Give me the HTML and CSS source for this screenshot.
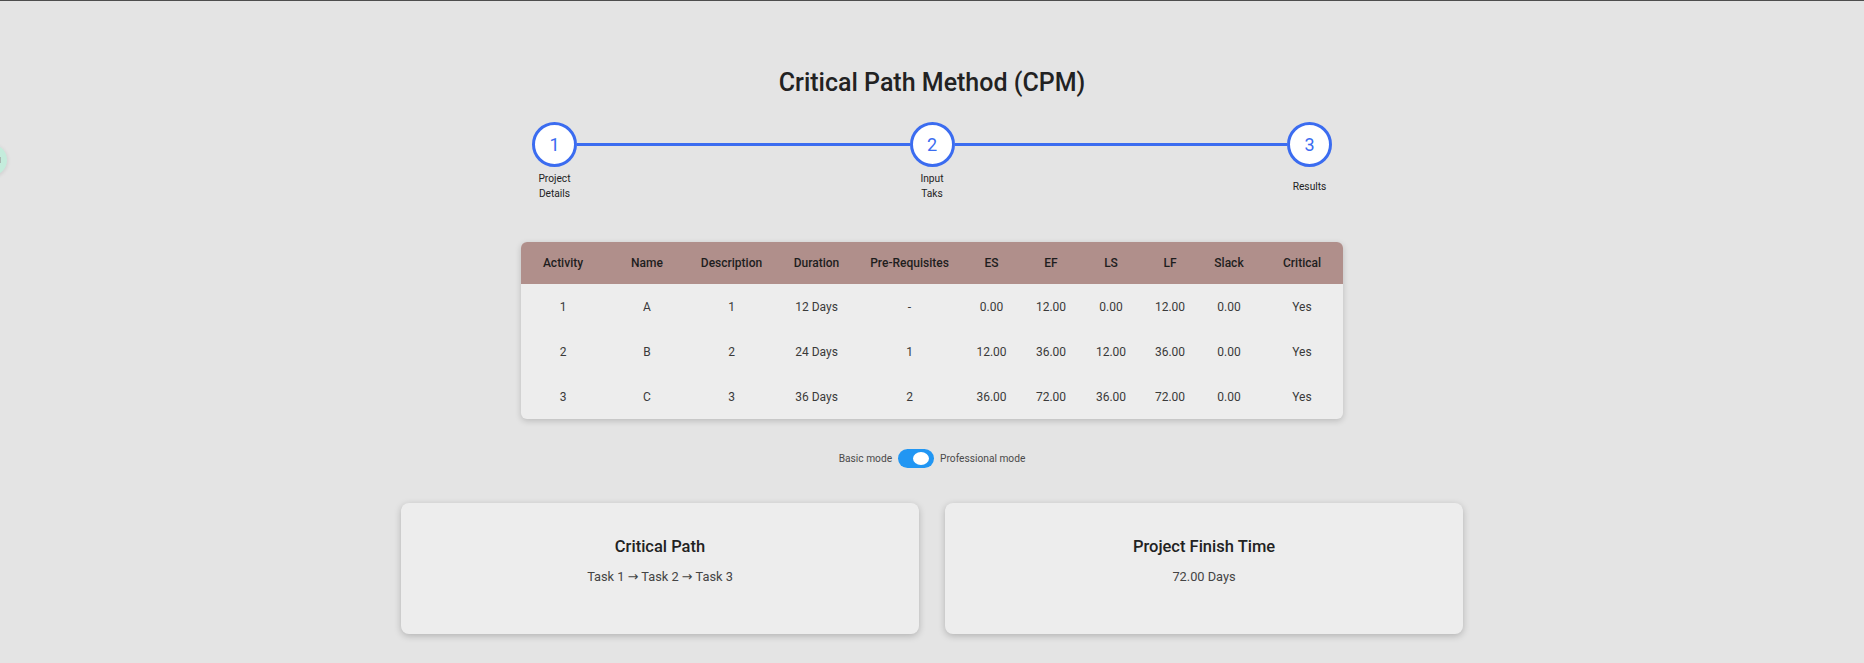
FILE: index.html
```html
<!DOCTYPE html>
<html lang="en">
<head>
<meta charset="utf-8">
<title>Critical Path Method (CPM)</title>
<link rel="stylesheet" href="styles.css">
</head>
<body>
<div class="fab"><span class="fab-dot"></span></div>
<main class="page">
  <h1 class="title">Critical Path Method (CPM)</h1>

  <div class="stepper">
    <div class="step">
      <div class="step-circle">1</div>
      <div class="step-label"><span>Project Details</span></div>
    </div>
    <div class="connector"></div>
    <div class="step">
      <div class="step-circle">2</div>
      <div class="step-label"><span>Input Taks</span></div>
    </div>
    <div class="connector"></div>
    <div class="step">
      <div class="step-circle">3</div>
      <div class="step-label"><span>Results</span></div>
    </div>
  </div>

  <table class="results">
    <colgroup>
      <col class="c84"><col class="c84"><col class="c85"><col class="c85"><col class="c101">
      <col class="c63"><col class="c56"><col class="c64"><col class="c54"><col class="c64"><col class="c82">
    </colgroup>
    <thead>
      <tr>
        <th>Activity</th><th>Name</th><th>Description</th><th>Duration</th><th>Pre-Requisites</th>
        <th>ES</th><th>EF</th><th>LS</th><th>LF</th><th>Slack</th><th>Critical</th>
      </tr>
    </thead>
    <tbody>
      <tr>
        <td>1</td><td>A</td><td>1</td><td>12 Days</td><td>-</td>
        <td>0.00</td><td>12.00</td><td>0.00</td><td>12.00</td><td>0.00</td><td>Yes</td>
      </tr>
      <tr>
        <td>2</td><td>B</td><td>2</td><td>24 Days</td><td>1</td>
        <td>12.00</td><td>36.00</td><td>12.00</td><td>36.00</td><td>0.00</td><td>Yes</td>
      </tr>
      <tr>
        <td>3</td><td>C</td><td>3</td><td>36 Days</td><td>2</td>
        <td>36.00</td><td>72.00</td><td>36.00</td><td>72.00</td><td>0.00</td><td>Yes</td>
      </tr>
    </tbody>
  </table>

  <div class="mode-toggle">
    <span class="mode-text">Basic mode</span>
    <span class="switch"><span class="knob"></span></span>
    <span class="mode-text">Professional mode</span>
  </div>

  <div class="cards">
    <section class="card">
      <h3 class="card-title">Critical Path</h3>
      <p class="card-text">Task 1 <span class="arrow">→</span> Task 2 <span class="arrow">→</span> Task 3</p>
    </section>
    <section class="card">
      <h3 class="card-title">Project Finish Time</h3>
      <p class="card-text">72.00 Days</p>
    </section>
  </div>
</main>
</body>
</html>
```

FILE: styles.css
```css
html, body {
  margin: 0;
  padding: 0;
}

body {
  background: #e4e4e4;
  border-top: 1px solid #4d4d4d;
  font-family: Roboto, "Liberation Sans", Arial, sans-serif;
  color: #222;
  min-height: 662px;
  overflow: hidden;
}

.fab {
  position: fixed;
  left: -25px;
  top: 144px;
  width: 32px;
  height: 32px;
  border-radius: 50%;
  background: #c4ecdc;
  box-shadow: 0 1px 4px rgba(0, 0, 0, 0.12);
  display: flex;
  align-items: center;
  justify-content: flex-end;
}

.fab-dot {
  width: 3px;
  height: 6px;
  margin-right: 6px;
  background: #a9b8b2;
}

.page {
  display: flex;
  flex-direction: column;
  align-items: center;
}

.title {
  margin: 67px 0 0;
  font-size: 25px;
  line-height: 30px;
  font-weight: 500;
  color: #222;
}

.stepper {
  width: 800px;
  margin-top: 24px;
  display: flex;
  align-items: flex-start;
}

.step {
  width: 45px;
  display: flex;
  flex-direction: column;
  align-items: center;
}

.step-circle {
  width: 45px;
  height: 45px;
  box-sizing: border-box;
  border: 3px solid #3b6cf0;
  border-radius: 50%;
  background: #fff;
  color: #3b6cf0;
  font-size: 18px;
  display: flex;
  align-items: center;
  justify-content: center;
}

.step-label {
  margin-top: 4px;
  height: 30px;
  width: 40px;
  display: flex;
  align-items: center;
  justify-content: center;
  text-align: center;
  font-size: 10.2px;
  line-height: 15px;
  color: #222;
}

.connector {
  flex: 1;
  height: 3px;
  margin-top: 21px;
  background: #3b6cf0;
}

.results {
  margin-top: 41px;
  width: 822px;
  table-layout: fixed;
  border-collapse: separate;
  border-spacing: 0;
  border-radius: 6px;
  overflow: hidden;
  background: #ededed;
  box-shadow: 0 2px 6px rgba(0, 0, 0, 0.18);
  font-size: 12px;
}

.c84 { width: 84px; }
.c85 { width: 85px; }
.c101 { width: 101px; }
.c63 { width: 63px; }
.c56 { width: 56px; }
.c64 { width: 64px; }
.c54 { width: 54px; }
.c82 { width: 82px; }

.results th {
  background: #b08f8b;
  height: 42px;
  padding: 0;
  font-weight: 500;
  color: #1e1e1e;
  text-align: center;
}

.results td {
  height: 45px;
  padding: 0;
  text-align: center;
  color: #3a3a3a;
}

.mode-toggle {
  margin-top: 30px;
  display: flex;
  align-items: center;
  gap: 6px;
}

.mode-text {
  font-size: 10.2px;
  color: #4a4a4a;
}

.switch {
  width: 36px;
  height: 19px;
  box-sizing: border-box;
  border-radius: 10px;
  background: #2196f3;
  display: flex;
  align-items: center;
  justify-content: flex-end;
  padding-right: 5px;
}

.knob {
  width: 16px;
  height: 13px;
  border-radius: 50%;
  background: #fff;
}

.cards {
  margin-top: 35px;
  display: flex;
  gap: 26px;
}

.card {
  width: 518px;
  height: 131px;
  box-sizing: border-box;
  padding-top: 34px;
  background: #ededed;
  border-radius: 8px;
  box-shadow: 0 2px 7px rgba(0, 0, 0, 0.22);
  text-align: center;
}

.card-title {
  margin: 0;
  font-size: 16.5px;
  line-height: 20px;
  font-weight: 500;
  color: #222;
}

.card-text {
  margin: 11px 0 0;
  font-size: 12.8px;
  line-height: 17px;
  color: #444;
}

.arrow {
  font-family: "DejaVu Sans", sans-serif;
  font-size: 12.8px;
}
```
